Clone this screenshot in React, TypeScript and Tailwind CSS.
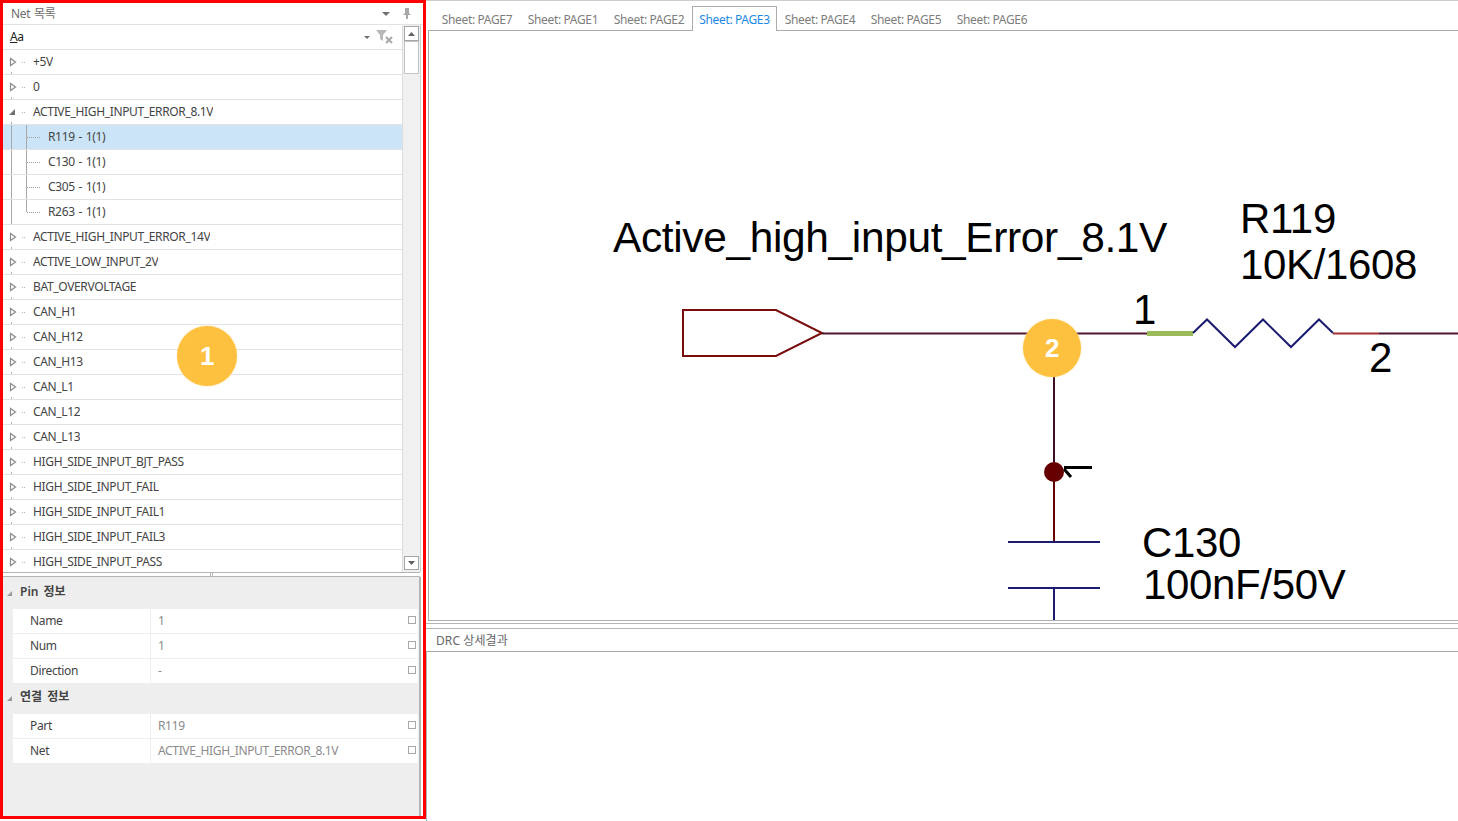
const UI_FONT = "font-['Noto_Sans','Noto_Sans_CJK_KR',sans-serif]";

const nets = [
  "+5V",
  "0",
  "ACTIVE_HIGH_INPUT_ERROR_8.1V",
  "ACTIVE_HIGH_INPUT_ERROR_14V",
  "ACTIVE_LOW_INPUT_2V",
  "BAT_OVERVOLTAGE",
  "CAN_H1",
  "CAN_H12",
  "CAN_H13",
  "CAN_L1",
  "CAN_L12",
  "CAN_L13",
  "HIGH_SIDE_INPUT_BJT_PASS",
  "HIGH_SIDE_INPUT_FAIL",
  "HIGH_SIDE_INPUT_FAIL1",
  "HIGH_SIDE_INPUT_FAIL3",
  "HIGH_SIDE_INPUT_PASS",
];

const pins = ["R119 - 1(1)", "C130 - 1(1)", "C305 - 1(1)", "R263 - 1(1)"];
const sheets = ["PAGE7", "PAGE1", "PAGE2", "PAGE3", "PAGE4", "PAGE5", "PAGE6"];

function NetRow({ name, open }: { name: string; open?: boolean }) {
  return (
    <div className="flex h-[25px] shrink-0 items-center border-b border-[#e3e3e3]">
      <svg width="30" height="24" className="shrink-0">
        {open ? (
          <path d="M6 15 H12 V9 Z" fill="#707070" />
        ) : (
          <path d="M7.5 8.5 V15.5 L12.5 12 Z" fill="none" stroke="#8a8a8a" strokeWidth="1.2" />
        )}
        <path d="M19 12.5 H22" stroke="#b5b5b5" strokeDasharray="1 1" />
        {open ? <path d="M8.5 22 V24" stroke="#a8a8a8" /> : <path d="M8.5 22 V24" stroke="#b5b5b5" />}
      </svg>
      <span className="truncate">{name}</span>
    </div>
  );
}

function PinRow({ name, selected, last }: { name: string; selected?: boolean; last?: boolean }) {
  return (
    <div className={`flex h-[25px] shrink-0 items-center border-b border-[#e3e3e3] ${selected ? "bg-[#cce4f7]" : ""}`}>
      <svg width="45" height="24" className="shrink-0">
        <path d="M8.5 0 V25" stroke="#a8a8a8" />
        <path d={last ? "M23.5 0 V12" : "M23.5 0 V25"} stroke="#a8a8a8" />
        <path d="M24 12.5 H37" stroke="#a0a0a0" strokeDasharray="1 1" />
      </svg>
      <span className="[word-spacing:1px]">{name}</span>
    </div>
  );
}

function Scrollbar() {
  return (
    <div className="flex w-[18px] shrink-0 flex-col items-center border-r border-[#cfcfcf] bg-[#f0f0f0] pt-px">
      <div className="flex h-[15px] w-[15px] items-center justify-center border border-[#a6a6a6] bg-white">
        <svg width="7" height="4"><path d="M0 4 L3.5 0 L7 4 Z" fill="#606060" /></svg>
      </div>
      <div className="h-[33px] w-[15px] border border-[#c4c4c4] bg-white" />
      <div className="flex-1" />
      <div className="mb-[2px] flex h-[14px] w-[15px] items-center justify-center border border-[#a6a6a6] bg-white">
        <svg width="7" height="4"><path d="M0 0 L3.5 4 L7 0 Z" fill="#606060" /></svg>
      </div>
    </div>
  );
}

function PropSection({ title, rows, className }: { title: string; rows: [string, string][]; className: string }) {
  return (
    <>
      <div className={`flex items-start font-semibold tracking-normal text-[#444] [word-spacing:2px] ${className}`}>
        <svg width="17" height="18" className="mt-[-1px] shrink-0">
          <path d="M4 14 H9 V9 Z" fill="#9a9a9a" />
        </svg>
        <span>{title}</span>
      </div>
      {rows.map(([label, value]) => (
        <div key={label} className="ml-[10px] mr-[1px] flex h-[25px] border-b border-[#eeeeee] bg-white">
          <div className="flex w-[138px] items-center border-r border-[#eeeeee] pl-[17px]">{label}</div>
          <div className="flex flex-1 items-center justify-between pl-[7px] pr-[2px] text-[#8a8a8a]">
            <span>{value}</span>
            <span className="mb-[2px] h-[8px] w-[8px] border border-[#a8a8a8]" />
          </div>
        </div>
      ))}
    </>
  );
}

function LeftPanel() {
  return (
    <aside className="flex h-[819px] w-[426px] shrink-0 flex-col border-[3px] border-[#ff0000] bg-white">
      <div className="flex h-[22px] shrink-0 items-center justify-between border-b border-[#e3e3e3] pl-2 pr-[12px] text-[#6d6d6d]">
        <span className="[word-spacing:1px]">Net 목록</span>
        <div className="flex items-center gap-[13px]">
          <svg width="8" height="4"><path d="M0 0 H8 L4 4 Z" fill="#707070" /></svg>
          <svg width="8" height="11">
            <path d="M2 0 H6 V5 L8 7 H5 V11 H3 V7 H0 L2 5 Z" fill="#a8a8a8" />
          </svg>
        </div>
      </div>
      <div className="flex h-[547px] shrink-0 pr-[3px]">
        <div className="flex w-[400px] shrink-0 flex-col overflow-hidden border-r border-[#dcdcdc] text-[#444]">
          <div className="flex h-[25px] shrink-0 items-center justify-between border-b border-[#e3e3e3] pl-[7px] pr-[9px]">
            <span className="text-[#222] underline decoration-[#222] [text-decoration-skip-ink:none]">
              A<span className="inline-block no-underline">a</span>
            </span>
            <div className="flex items-center gap-[6px]">
              <svg width="6" height="3"><path d="M0 0 H6 L3 3 Z" fill="#707070" /></svg>
              <svg width="17" height="14">
                <path d="M0 0 H11 L7 5 V11 L4 9 V5 Z" fill="#b8b8b8" />
                <path d="M10 7 L16 13 M16 7 L10 13" stroke="#a8a8a8" strokeWidth="2" />
              </svg>
            </div>
          </div>
          <NetRow name={nets[0]} />
          <NetRow name={nets[1]} />
          <NetRow name={nets[2]} open />
          {pins.map((pin, i) => (
            <PinRow key={pin} name={pin} selected={i === 0} last={i === 3} />
          ))}
          {nets.slice(3).map((net) => (
            <NetRow key={net} name={net} />
          ))}
        </div>
        <Scrollbar />
      </div>
      <div className="mr-[3px] flex h-[5px] shrink-0 items-center justify-center border-y border-[#b4b4b4] bg-white">
        <span className="h-[3px] w-[3px] border-x border-[#b4b4b4]" />
      </div>
      <div className="mr-[2px] flex-1 border-r-2 border-[#b4b4b4] bg-[#eeeeee] text-[#444]">
        <PropSection
          title="Pin 정보"
          className="h-[32px] pt-[6px]"
          rows={[
            ["Name", "1"],
            ["Num", "1"],
            ["Direction", "-"],
          ]}
        />
        <PropSection
          title="연결 정보"
          className="h-[30px] pt-[4px]"
          rows={[
            ["Part", "R119"],
            ["Net", "ACTIVE_HIGH_INPUT_ERROR_8.1V"],
          ]}
        />
      </div>
    </aside>
  );
}

function Schematic() {
  const label = { fontFamily: "'Liberation Sans', Arial, sans-serif", fontSize: 42, fill: "#000" };
  return (
    <svg viewBox="429 31 1029 589" className="h-full w-full">
      <path d="M683 310 H776 L822 333 L776 356 H683 Z" fill="none" stroke="#7a0c0c" strokeWidth="2" />
      <path d="M822 333.5 H1147" stroke="#4d1530" strokeWidth="2" />
      <path d="M1147 333.5 H1193" stroke="#9bbb59" strokeWidth="5" />
      <path d="M1193 333 L1207 319.5 L1235 347 L1263 319.5 L1291 347 L1319 319.5 L1333 333" fill="none" stroke="#1b1b6f" strokeWidth="2" />
      <path d="M1333 333.5 H1379" stroke="#a13232" strokeWidth="2" />
      <path d="M1379 333.5 H1458" stroke="#4d1530" strokeWidth="2" />
      <path d="M1054 370 V465" stroke="#3c0f24" strokeWidth="2" />
      <path d="M1054 480 V542" stroke="#660000" strokeWidth="2" />
      <circle cx="1054" cy="472" r="10" fill="#660000" />
      <path d="M1064 467.5 H1092" stroke="#000" strokeWidth="3" />
      <path d="M1064 469 L1071 477" stroke="#000" strokeWidth="3" />
      <path d="M1008 542 H1100 M1008 588 H1100 M1054 588 V620" stroke="#1b1b6f" strokeWidth="2" />
      <text x="613" y="251.5" {...label} fontSize="42.45">Active_high_input_Error_8.1V</text>
      <text x="1240" y="233" {...label}>R119</text>
      <text x="1240" y="279" {...label}>10K/1608</text>
      <text x="1133" y="324" {...label}>1</text>
      <text x="1369" y="372" {...label}>2</text>
      <text x="1142" y="557" {...label}>C130</text>
      <text x="1143" y="599" {...label}>100nF/50V</text>
    </svg>
  );
}

function Badge({ n, className }: { n: number; className: string }) {
  return (
    <div
      className={`absolute flex items-center justify-center rounded-full bg-[#fdc13f] font-['Liberation_Sans',sans-serif] text-[26px] font-bold text-white shadow-[0_0_2px_#fde3a0] ${className}`}
    >
      {n}
    </div>
  );
}

export default function App() {
  return (
    <div className={`relative flex h-[821px] w-[1458px] overflow-hidden bg-white text-[12px] ${UI_FONT} tracking-[-0.35px]`}>
      <LeftPanel />
      <main className="flex min-w-0 flex-1 flex-col border-t border-[#cccccc]">
        <div className="flex h-[29px] shrink-0 items-end pl-[2px]">
          <div className="flex h-full items-end pl-[6px] text-[#7d7d7d]">
            {sheets.map((sheet) => (
              <div
                key={sheet}
                className={
                  sheet === "PAGE3"
                    ? "relative top-px flex h-[25px] w-[85px] items-center justify-center border-x border-t border-[#acacac] bg-white pt-[2px] text-[#1e88e5]"
                    : "flex h-[24px] w-[86px] items-center justify-center pt-[3px]"
                }
              >
                Sheet: {sheet}
              </div>
            ))}
          </div>
        </div>
        <div className="ml-[2px] h-[591px] shrink-0 overflow-hidden border-y border-l border-[#acacac]">
          <Schematic />
        </div>
        <div className="mt-[2px] h-[6px] shrink-0 border-y border-[#b4b4b4]" />
        <div className="flex h-[23px] shrink-0 items-center border-b border-[#a8a8a8] pl-[10px] pt-[1px] tracking-[0.1px] text-[#666]">
          DRC 상세결과
        </div>
        <div className="flex-1 border-l border-[#b4b4b4]" />
      </main>
      <Badge n={1} className="left-[177px] top-[326px] h-[60px] w-[60px]" />
      <Badge n={2} className="left-[1023px] top-[319px] h-[58px] w-[58px]" />
    </div>
  );
}
